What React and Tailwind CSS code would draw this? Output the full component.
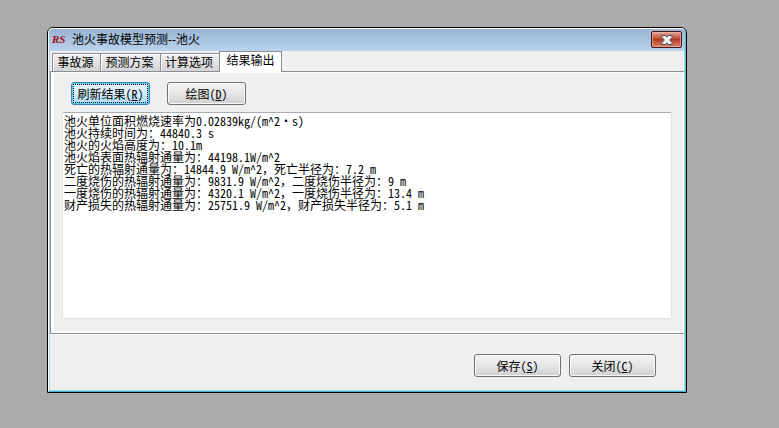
import { useState } from 'react'
import clsx from 'clsx'

const tabs = [
  { id: 'source', label: '事故源', width: 'w-[48px]' },
  { id: 'plan', label: '预测方案', width: 'w-[60px]' },
  { id: 'options', label: '计算选项', width: 'w-[59px]' },
  { id: 'output', label: '结果输出', width: 'w-[63px]' },
]

const report = [
  '池火单位面积燃烧速率为0.02839kg/(m^2·s)',
  '池火持续时间为：44840.3 s',
  '池火的火焰高度为：10.1m',
  '池火焰表面热辐射通量为：44198.1W/m^2',
  '死亡的热辐射通量为：14844.9 W/m^2，死亡半径为：7.2 m',
  '二度烧伤的热辐射通量为：9831.9 W/m^2，二度烧伤半径为：9 m',
  '一度烧伤的热辐射通量为：4320.1 W/m^2，一度烧伤半径为：13.4 m',
  '财产损失的热辐射通量为：25751.9 W/m^2，财产损失半径为：5.1 m',
].join('\n')

function Button({ label, hotkey, active, className }) {
  return (
    <button
      type="button"
      className={clsx(
        "h-[23px] rounded-[3px] border p-px font-['Noto_Sans_Mono_CJK_SC','Noto_Sans_CJK_SC',monospace] text-[12px] leading-[17px]",
        active
          ? 'border-[#3c7fb1] bg-linear-to-b from-[#e8f5fc] via-[#d4ecfa] to-[#a9daf5] shadow-[inset_0_0_0_1px_#5fd0f5]'
          : 'border-[#707070] bg-linear-to-b from-[#f3f3f3] via-[#e6e6e6] to-[#cfcfcf] shadow-[inset_0_0_0_1px_#fafafa]',
        className
      )}
    >
      <span
        className={clsx(
          'flex h-full items-center justify-center border border-dotted',
          active ? 'border-black' : 'border-transparent'
        )}
      >
        <span>
          {label}(<span className="underline decoration-1 underline-offset-1">{hotkey}</span>)
        </span>
      </span>
    </button>
  )
}

export default function App() {
  const [current, setCurrent] = useState('output')

  return (
    <div className="flex min-h-screen bg-[#ababab] pt-[27px] pr-[92px] pb-[35px] pl-[47px] font-['Liberation_Sans','Noto_Sans_CJK_SC',sans-serif] text-[12px] text-black">
      <div role="dialog" aria-labelledby="title" className="flex flex-1 rounded-t-md border border-black">
        <div className="flex flex-1 rounded-t-[5px] border border-t-white border-r-[#53bcd6] border-b-[#3fb5d4] border-l-white bg-[#b9d1ea]">
          <div className="flex flex-1 flex-col pb-px">
            {/* Title bar */}
            <header className="flex h-[22px] items-center rounded-t-[4px] bg-linear-to-b from-[#99b4d1] to-[#bad2ec] pr-[3px] pl-[3px]">
              <span
                aria-hidden="true"
                className="w-[20px] pb-[3px] font-['Liberation_Serif',serif] text-[11px] leading-[14px] font-bold text-[#a00d14] italic"
              >
                RS
              </span>
              <h1 id="title" className="flex-1 leading-[18px]">
                池火事故模型预测--池火
              </h1>
              <button
                type="button"
                aria-label="关闭窗口"
                className="mb-px flex h-[17px] w-[31px] items-center justify-center rounded-[2px] border border-[#48121b] bg-linear-to-b from-[#e7a79b] from-0% via-[#b53a23] via-50% to-[#d8836b] shadow-[inset_0_0_0_1px_#f0b9ad99]"
              >
                <svg width="12" height="10" viewBox="0 0 12 10" fill="none">
                  <path
                    d="M1 .5h3.5L6 2.2 7.5.5H11v2L8.6 5 11 7.5v2H7.5L6 7.8 4.5 9.5H1v-2L3.4 5 1 2.5Z"
                    fill="#f4f4f4"
                    stroke="#4a4f5e"
                  />
                </svg>
              </button>
            </header>

            <main className="mr-px ml-px flex flex-1 flex-col bg-[#efefef]">
              {/* Tabs */}
              <div role="tablist" className="relative -mb-px flex h-[21px] items-end pl-[2px]">
                {tabs.map((tab) => (
                  <button
                    key={tab.id}
                    type="button"
                    role="tab"
                    aria-selected={tab.id === current}
                    onClick={() => setCurrent(tab.id)}
                    className={clsx(
                      'flex shrink-0 justify-center border border-b-0 border-[#8b8c94] leading-[18px] whitespace-nowrap',
                      tab.width,
                      tab.id === current
                        ? 'h-[21px] bg-white'
                        : 'mb-px h-[18px] border-r-0 bg-linear-to-b from-[#f2f2f2] to-[#d4d4d4] pr-[2px] shadow-[inset_1px_1px_0_#ffffff]'
                    )}
                  >
                    {tab.label}
                  </button>
                ))}
              </div>

              {/* Output panel */}
              <section className="flex flex-1 flex-col border-y border-l border-[#8b8c94]">
                <div className="flex flex-1 flex-col border-2 border-t border-l-3 border-white px-[8px] pt-[9px] pb-[12px]">
                  <div className="flex gap-[17px] pl-[9px]">
                    <Button label="刷新结果" hotkey="R" active className="w-[79px]" />
                    <Button label="绘图" hotkey="D" className="w-[79px]" />
                  </div>
                  <textarea
                    readOnly
                    aria-label="结果输出"
                    value={report}
                    className="mt-[7px] mr-[2px] flex-1 resize-none rounded-[2px] border border-[#e2e3ea] border-t-[#abadb3] bg-white px-px py-[2px] font-['Noto_Sans_Mono_CJK_SC','Noto_Sans_CJK_SC',monospace] text-[12px] leading-[12px] outline-none"
                  />
                </div>
              </section>

              {/* Footer */}
              <footer className="flex justify-end gap-[8px] border-t border-white pt-[19px] pr-[28px] pb-[13px]">
                <Button label="保存" hotkey="S" className="w-[87px]" />
                <Button label="关闭" hotkey="C" className="w-[87px]" />
              </footer>
            </main>
          </div>
        </div>
      </div>
    </div>
  )
}
